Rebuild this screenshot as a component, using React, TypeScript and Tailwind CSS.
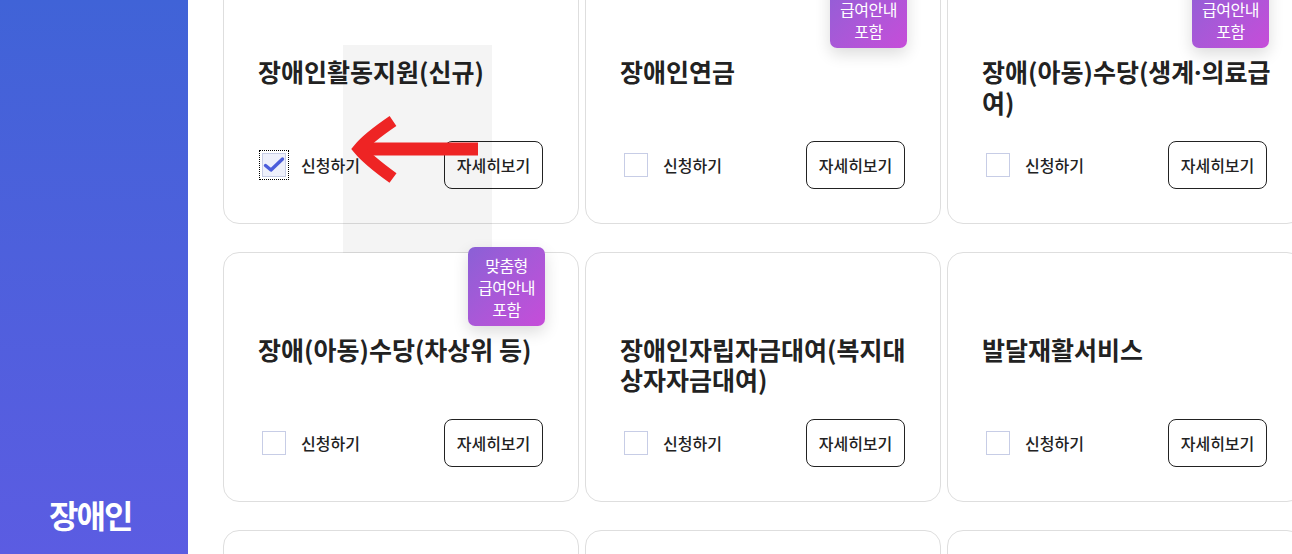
import { useState } from 'react';

type Benefit = {
  id: number;
  title: string;
  badge?: boolean;
  checked?: boolean;
};

const benefits: Benefit[] = [
  { id: 1, title: '장애인활동지원(신규)', checked: true },
  { id: 2, title: '장애인연금', badge: true },
  { id: 3, title: '장애(아동)수당(생계·의료급여)', badge: true },
  { id: 4, title: '장애(아동)수당(차상위 등)', badge: true },
  { id: 5, title: '장애인자립자금대여(복지대상자자금대여)' },
  { id: 6, title: '발달재활서비스' },
  { id: 7, title: '장애인 보조기기 교부' },
  { id: 8, title: '장애인 의료비 지원' },
  { id: 9, title: '장애인 자녀 교육비 지원' },
];

// middle dot gets a latin font so it stays narrow like the original
function Title({ text }: { text: string }) {
  const parts = text.split('·');
  return (
    <p className="text-[25px] leading-[30px] font-bold text-[#222]">
      {parts.map((part, i) => (
        <span key={i}>
          {i > 0 && <span style={{ fontFamily: '"Noto Sans", sans-serif' }}>·</span>}
          {part}
        </span>
      ))}
    </p>
  );
}

function Card({ item }: { item: Benefit }) {
  const [checked, setChecked] = useState(!!item.checked);

  return (
    <div className="relative h-[250px] flex flex-col border border-[#dedede] rounded-[16px] bg-white pl-[34px] pr-[30px] pt-[81px] pb-[34px]">
      {item.badge && (
        <div className="absolute -top-[6px] right-[33px] z-20 w-[77px] h-[79px] flex flex-col items-center justify-center rounded-[7px] bg-gradient-to-br from-[#8a60d6] to-[#c64cd9] text-white text-[16px] leading-[22px] tracking-[-0.5px] shadow-[0_6px_16px_rgba(0,0,0,0.14)]">
          <span>맞춤형</span>
          <span>급여안내</span>
          <span>포함</span>
        </div>
      )}

      <Title text={item.title} />

      <div className="mt-auto flex items-center justify-between">
        <label className="flex items-center ml-[4px] cursor-pointer">
          <span
            className={
              checked
                ? 'w-[24px] h-[24px] flex items-center justify-center border border-[#c7cde6] bg-[#eef0fb] outline-1 outline-dotted outline-black outline-offset-[2px]'
                : 'w-[24px] h-[24px] border border-[#c7cde6] bg-white'
            }
            onClick={() => setChecked(!checked)}
          >
            {checked && (
              <svg width="22" height="18" viewBox="0 0 22 18" fill="none">
                <path d="M2.5 9.5L8 14L19.5 3" stroke="#4b5ddb" strokeWidth="3.4" strokeLinecap="round" strokeLinejoin="round" />
              </svg>
            )}
          </span>
          <span className="ml-[15px] text-[16px] font-medium text-[#222]">신청하기</span>
        </label>

        <button className="w-[99px] h-[48px] mr-[5px] rounded-[8px] border border-[#222] bg-white text-[16px] font-medium text-[#222]">
          자세히보기
        </button>
      </div>
    </div>
  );
}

export default function App() {
  return (
    <div
      className="relative flex h-[554px] w-[1292px] overflow-hidden bg-white"
      style={{ fontFamily: '"Noto Sans CJK KR", "Noto Sans", sans-serif' }}
    >
      {/* Category sidebar */}
      <aside className="w-[188px] shrink-0 flex flex-col justify-end pb-[16px] pl-[49px] bg-gradient-to-b from-[#4063d7] to-[#5b5ce2]">
        <p className="text-[32px] font-bold text-white tracking-[-2px]">장애인</p>
      </aside>

      {/* Benefit cards */}
      <main className="pl-[35px] -mt-[26px]">
        <div className="grid grid-cols-[356px_356px_356px] gap-x-[6px] gap-y-[28px]">
          {benefits.map((b) => (
            <Card key={b.id} item={b} />
          ))}
        </div>
      </main>

      {/* Tutorial highlight */}
      <div className="absolute left-[343px] top-[45px] w-[149px] h-[208px] bg-black/[0.045] z-10 pointer-events-none" />
      <svg className="absolute left-[350px] top-[115px] z-30 pointer-events-none" width="140" height="70" viewBox="350 115 140 70">
        <path d="M478 149H364" stroke="#ee2424" strokeWidth="13" />
        <path d="M393 121Q368 138 359 149Q368 160 393 178" stroke="#ee2424" strokeWidth="12" fill="none" />
      </svg>
    </div>
  );
}
